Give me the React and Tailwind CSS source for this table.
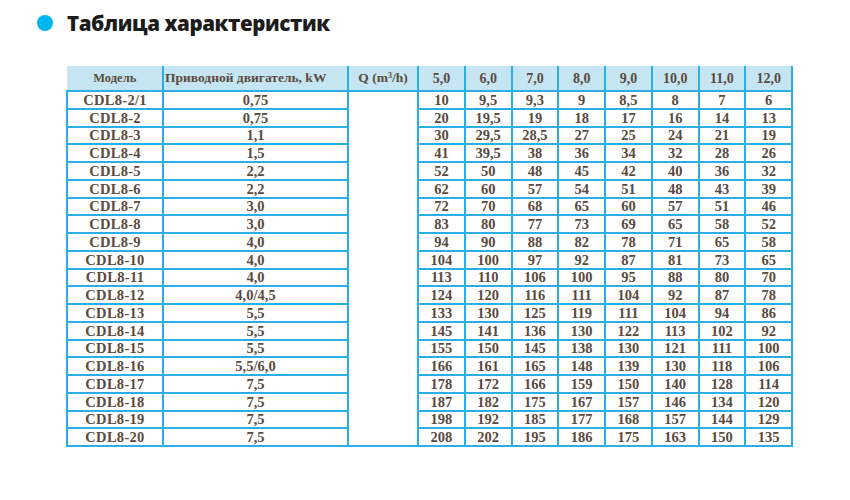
import React from "react";

const heads = ["5,0", "6,0", "7,0", "8,0", "9,0", "10,0", "11,0", "12,0"];
const rows = [
  ["CDL8-2/1", "0,75", [10, "9,5", "9,3", 9, "8,5", 8, 7, 6]],
  ["CDL8-2", "0,75", [20, "19,5", 19, 18, 17, 16, 14, 13]],
  ["CDL8-3", "1,1", [30, "29,5", "28,5", 27, 25, 24, 21, 19]],
  ["CDL8-4", "1,5", [41, "39,5", 38, 36, 34, 32, 28, 26]],
  ["CDL8-5", "2,2", [52, 50, 48, 45, 42, 40, 36, 32]],
  ["CDL8-6", "2,2", [62, 60, 57, 54, 51, 48, 43, 39]],
  ["CDL8-7", "3,0", [72, 70, 68, 65, 60, 57, 51, 46]],
  ["CDL8-8", "3,0", [83, 80, 77, 73, 69, 65, 58, 52]],
  ["CDL8-9", "4,0", [94, 90, 88, 82, 78, 71, 65, 58]],
  ["CDL8-10", "4,0", [104, 100, 97, 92, 87, 81, 73, 65]],
  ["CDL8-11", "4,0", [113, 110, 106, 100, 95, 88, 80, 70]],
  ["CDL8-12", "4,0/4,5", [124, 120, 116, 111, 104, 92, 87, 78]],
  ["CDL8-13", "5,5", [133, 130, 125, 119, 111, 104, 94, 86]],
  ["CDL8-14", "5,5", [145, 141, 136, 130, 122, 113, 102, 92]],
  ["CDL8-15", "5,5", [155, 150, 145, 138, 130, 121, 111, 100]],
  ["CDL8-16", "5,5/6,0", [166, 161, 165, 148, 139, 130, 118, 106]],
  ["CDL8-17", "7,5", [178, 172, 166, 159, 150, 140, 128, 114]],
  ["CDL8-18", "7,5", [187, 182, 175, 167, 157, 146, 134, 120]],
  ["CDL8-19", "7,5", [198, 192, 185, 177, 168, 157, 144, 129]],
  ["CDL8-20", "7,5", [208, 202, 195, 186, 175, 163, 150, 135]],
];

export default function App() {
  const cell = "border-2 border-[#2aaee6] p-0 text-center align-bottom leading-[15px]";
  return (
    <div className="w-[850px] h-[500px] bg-white relative overflow-hidden">
      <div className="flex items-center pt-[10px] pl-[37px] gap-[14px]">
        <div className="w-[16px] h-[16px] rounded-full bg-[#00b6f0]" />
        <div className="text-[20.5px] font-extrabold text-[#1c1c1c] leading-[26px] [font-family:'Open_Sans',sans-serif] tracking-[-0.4px]">
          Таблица характеристик
        </div>
      </div>
      <div className="pl-[66px] pt-[30px]">
        <table
          className="table-fixed border-collapse w-[725px] text-[14.5px] font-bold text-[#5a4a40] [font-family:'Liberation_Serif',serif]"
        >
          <colgroup>
            <col className="w-[96px]" />
            <col className="w-[185px]" />
            <col className="w-[70px]" />
            {heads.map((h) => (
              <col key={h} className="w-[46.75px]" />
            ))}
          </colgroup>
          <thead>
            <tr className="h-[25px] bg-[#c6e5f2]">
              <th className="border-2 border-[#2aaee6] border-t-0 border-l-[#d8e6ec] border-l font-bold text-[12.5px] align-bottom pb-[2px]">
                Модель
              </th>
              <th className="border-2 border-[#2aaee6] border-t-0 font-bold text-[13.5px] align-bottom pb-[2px] whitespace-nowrap text-left pl-[1px]">
                Приводной двигатель, kW
              </th>
              <th className="border-2 border-[#2aaee6] border-t-0 font-bold text-[13.5px] align-bottom pb-[2px]">
                Q (m<sup className="text-[8px]">3</sup>/h)
              </th>
              {heads.map((h) => (
                <th key={h} className="border-2 border-[#2aaee6] border-t-0 font-bold text-[14px] align-bottom pb-[1px]">
                  {h}
                </th>
              ))}
            </tr>
          </thead>
          <tbody>
            {rows.map((r, i) => (
              <tr key={r[0]} className="h-[17.75px]">
                <td className={`${cell} tracking-[0.3px]`}>{r[0]}</td>
                <td className={cell}>{r[1]}</td>
                {i === 0 && <td rowSpan={20} className="border-2 border-[#2aaee6] p-0" />}
                {r[2].map((v, j) => (
                  <td key={j} className={cell}>{v}</td>
                ))}
              </tr>
            ))}
          </tbody>
        </table>
      </div>
    </div>
  );
}
